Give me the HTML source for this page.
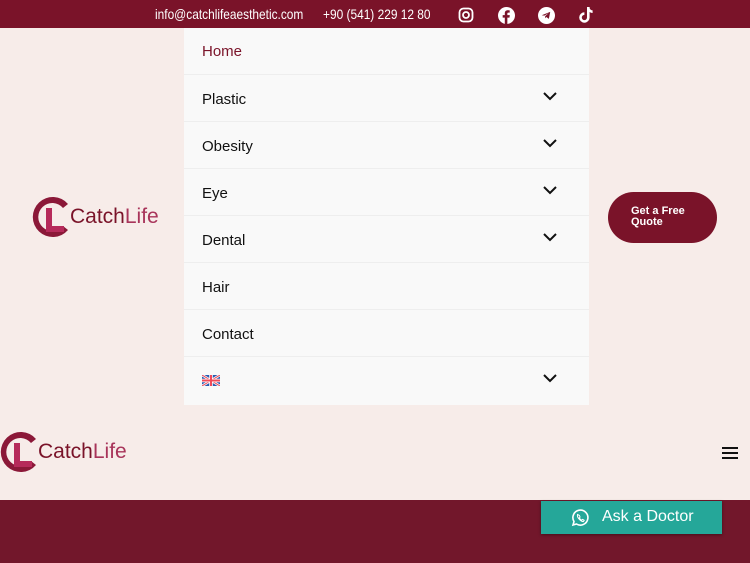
<!DOCTYPE html>
<html><head><style>
*{margin:0;padding:0;box-sizing:border-box}
body{width:750px;height:563px;overflow:hidden;background:#f7ece9;font-family:"Liberation Sans",sans-serif;position:relative}
.top{position:absolute;left:0;top:0;width:750px;height:28px;background:#7a1329;color:#fff;font-size:14px}
.top span{position:absolute;top:6px;transform-origin:0 0;transform:scaleX(.85);white-space:nowrap}
.menu{position:absolute;left:184px;top:28px;width:405px;height:377px;background:#f9f9f9}
.row{height:47px;border-bottom:1px solid #eeeeee;position:relative;font-size:15px;color:#111;padding:16px 0 0 18px}
.row svg{position:absolute;right:32px;top:17px}
.logo{position:absolute;display:flex;align-items:center}
.logo b{font-weight:normal;color:#7a1329;font-size:21px}
.logo b i{font-style:normal;color:#a8345a}
.btn{position:absolute;left:608px;top:192px;width:109px;height:51px;border-radius:26px;background:#7a1329;color:#fff;font-size:11px;font-weight:bold;padding:14px 0 0 23px;line-height:11px}
.hdr2{position:absolute;left:0;top:406px;width:750px;height:94px;background:#f7ece9}
.foot{position:absolute;left:0;top:500px;width:750px;height:63px;background:#72172b}
.ask{position:absolute;left:541px;top:501px;width:181px;height:33px;background:#25a799;color:#fff;font-size:16px;box-shadow:0 1px 3px rgba(0,0,0,.4);padding:7px 0 0 61px}
</style></head><body>
<div class="top">
<span style="left:155px">info@catchlifeaesthetic.com</span>
<span style="left:323px">+90 (541) 229 12 80</span>
<svg style="position:absolute;left:458px;top:7px" width="16" height="16" viewBox="0 0 16 16" fill="none" stroke="#fff" stroke-width="1.8"><rect x="1.5" y="1.5" width="13" height="13" rx="4"/><circle cx="8" cy="8" r="3"/></svg>
<svg style="position:absolute;left:498px;top:7px" width="17" height="17" viewBox="0 0 16 16"><circle cx="8" cy="8" r="8" fill="#fff"/><path d="M8.8 16V10h2l.3-2.3H8.8V6.3c0-.6.2-1 1-1h1.2V3.2c-.3 0-1-.1-1.8-.1-1.8 0-2.8 1-2.8 2.9v1.7h-2V10h2v6z" fill="#7a1329"/></svg>
<svg style="position:absolute;left:538px;top:7px" width="17" height="17" viewBox="0 0 16 16"><circle cx="8" cy="8" r="8" fill="#fff"/><path d="M3.5 7.8l8-3.2-1.3 6.6-2.4-1.8-1.2 1.2.2-2 3.3-3-4.1 2.5z" fill="#7a1329"/></svg>
<svg style="position:absolute;left:579px;top:6px" width="15" height="17" viewBox="0 0 15 17"><path d="M8 1v10.5a2.6 2.6 0 1 1-2.6-2.6V6.3A5.2 5.2 0 1 0 10.6 11.5V6a5 5 0 0 0 3 1V4.4A3 3 0 0 1 10.6 1z" fill="#fff"/></svg>
</div>
<div class="logo" style="left:32px;top:196px">
<svg width="40" height="42" viewBox="0 0 40 42"><path d="M36 8A20 20 0 1 0 36 34L31 30A14 14 0 1 1 31 12z" fill="#8b1838"/><path d="M14 12h6v18h12v6H14z" fill="#b62a5a"/></svg>
<b style="margin-left:-2px">Catch<i>Life</i></b></div>
<div class="menu">
<div class="row" style="color:#7a1329;padding-top:15px">Home</div>
<div class="row">Plastic<svg width="14" height="9" viewBox="0 0 14 9"><path d="M1 1l6 6 6-6" fill="none" stroke="#111" stroke-width="2"/></svg></div>
<div class="row">Obesity<svg width="14" height="9" viewBox="0 0 14 9"><path d="M1 1l6 6 6-6" fill="none" stroke="#111" stroke-width="2"/></svg></div>
<div class="row">Eye<svg width="14" height="9" viewBox="0 0 14 9"><path d="M1 1l6 6 6-6" fill="none" stroke="#111" stroke-width="2"/></svg></div>
<div class="row">Dental<svg width="14" height="9" viewBox="0 0 14 9"><path d="M1 1l6 6 6-6" fill="none" stroke="#111" stroke-width="2"/></svg></div>
<div class="row">Hair</div>
<div class="row">Contact</div>
<div class="row" style="border:none"><svg style="position:absolute;left:18px;top:18px" width="18" height="11" viewBox="0 0 18 11"><rect width="18" height="11" fill="#2a5bb0"/><path d="M0 0L18 11M18 0L0 11" stroke="#fff" stroke-width="2.5"/><path d="M0 0L18 11M18 0L0 11" stroke="#e84a5a" stroke-width="1"/><path d="M9 0v11M0 5.5h18" stroke="#fff" stroke-width="3.5"/><path d="M9 0v11M0 5.5h18" stroke="#f04a5a" stroke-width="2"/></svg><svg width="14" height="9" viewBox="0 0 14 9"><path d="M1 1l6 6 6-6" fill="none" stroke="#111" stroke-width="2"/></svg></div>
</div>
<div class="btn">Get a Free<br>Quote</div>
<div class="hdr2">
<div class="logo" style="left:0;top:25px">
<svg width="40" height="42" viewBox="0 0 40 42"><path d="M36 8A20 20 0 1 0 36 34L31 30A14 14 0 1 1 31 12z" fill="#8b1838"/><path d="M14 12h6v18h12v6H14z" fill="#b62a5a"/></svg>
<b style="margin-left:-2px">Catch<i>Life</i></b></div>
<svg style="position:absolute;left:722px;top:40px" width="16" height="14" viewBox="0 0 16 14"><path d="M0 2h16M0 7h16M0 12h16" stroke="#111" stroke-width="2"/></svg>
</div>
<div class="foot"></div>
<div class="ask"><svg style="position:absolute;left:30px;top:8px" width="18" height="18" viewBox="0 0 18 18" fill="none" stroke="#fff" stroke-width="1.6"><path d="M2 16l1-3.5A7.5 7.5 0 1 1 5.5 15z"/><path d="M6.5 5.5c-.5 1.5.5 3.5 2 5s3 2.3 4 2l.7-1.2-1.6-.9-.8.8c-1-.4-2-1.4-2.5-2.4l.8-.8-.8-1.6z" stroke-width="1"/></svg>Ask a Doctor</div>
</body></html>
